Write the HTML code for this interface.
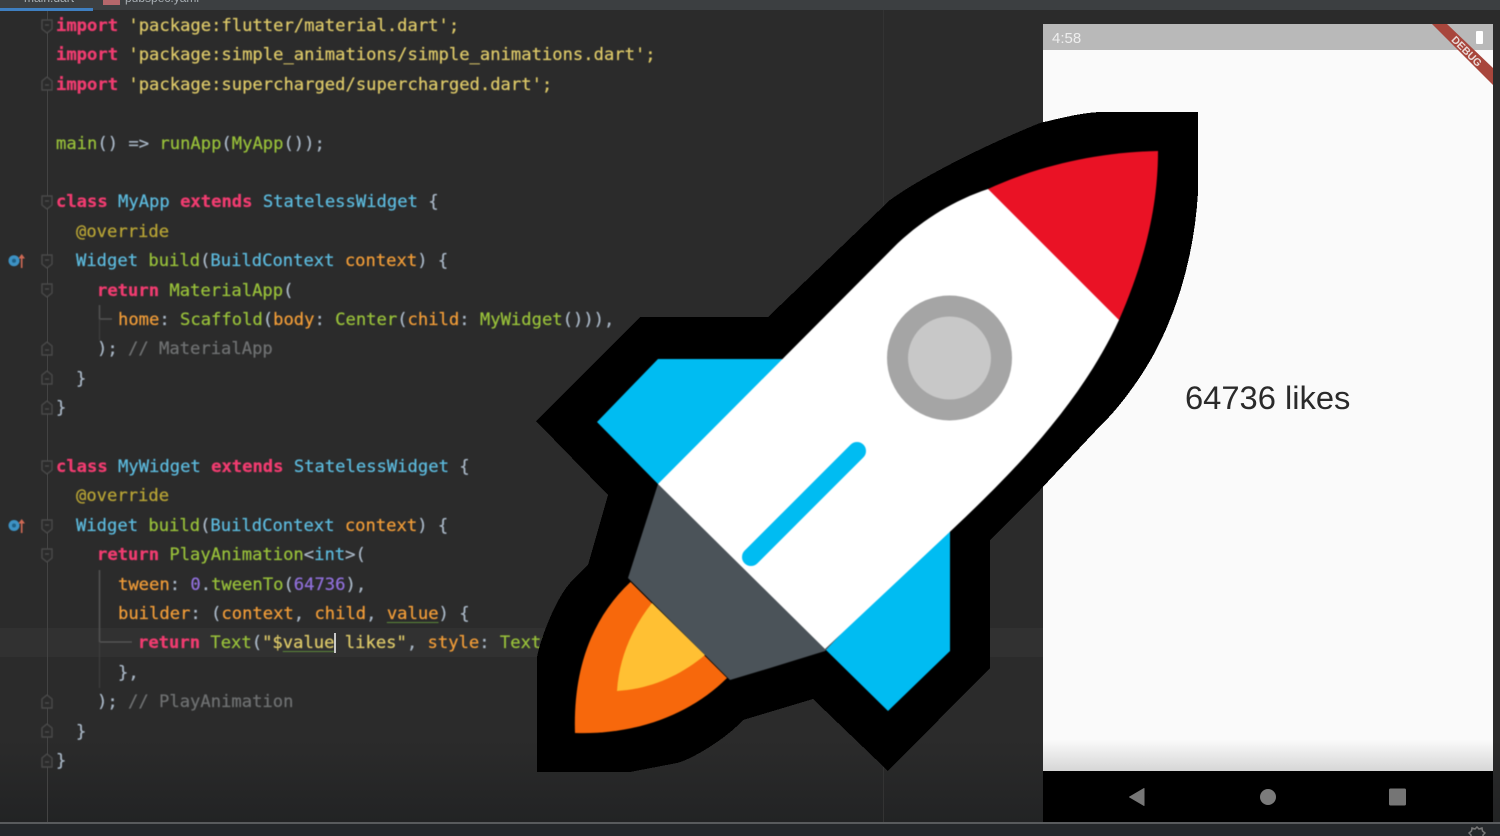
<!DOCTYPE html>
<html><head><meta charset="utf-8"><style>
html,body{margin:0;padding:0;background:#2b2b2b}
#root{position:relative;width:1500px;height:836px;overflow:hidden;background:linear-gradient(#2b2b2b 0,#2b2b2b 740px,#222324 822px)}
.top{position:absolute;left:0;top:0;width:1500px;height:10px;background:#3c3f41}
.tab{position:absolute;left:0;top:8px;width:93px;height:3px;background:#3f7fc0}
.tt{position:absolute;top:-9px;font:12px "Liberation Sans",sans-serif;color:#a9b0b5;white-space:pre}
.hl{position:absolute;left:0;top:628px;width:1043px;height:29px;background:#313131}
.code{position:absolute;left:0;top:1px;filter:blur(.4px);font-family:"DejaVu Sans Mono","Liberation Mono",monospace;font-size:17.18px;color:#a9b7c6}
.l{position:absolute;height:29px;line-height:29px;white-space:pre;-webkit-text-stroke:.25px currentColor}
.k{color:#f03c70;font-weight:bold}.s{color:#dcc868}.g{color:#98c03a}.c{color:#5cb9dc}.o{color:#f09c38}.m{color:#6f7172}.a{color:#b8a435}.n{color:#9170dc}.p{color:#a9b7c6}
.u{text-decoration:underline;text-decoration-color:#5d8a3a;text-underline-offset:3px}
.phone{position:absolute;left:1043px;top:24px;width:450px;height:798px;background:#fafafa;overflow:hidden}
.sb{position:absolute;left:0;top:0;width:450px;height:26px;background:#b9b9b9}
.time{position:absolute;left:9px;top:6px;font:15px "Liberation Sans",sans-serif;color:#eee}
.shade{position:absolute;left:0;top:716px;width:450px;height:31px;background:linear-gradient(#fafafa,#d6d6d6)}
.nav{position:absolute;left:0;top:747px;width:450px;height:51px;background:#000}
.likes{position:absolute;left:142px;top:354px;font:32.7px/40px "Liberation Sans",sans-serif;color:#2a2a2a;white-space:pre;filter:blur(.3px)}
.bot{position:absolute;left:0;top:822px;width:1500px;height:14px;background:#25282b;border-top:2px solid #595b5d;box-sizing:border-box}
.dbg{font:bold 10.5px "Liberation Sans",sans-serif;fill:#eadbd8}
</style></head><body>
<div id="root">
<div class="hl"></div>
<div style="position:absolute;left:883px;top:10px;width:1px;height:812px;background:#333"></div>
<div style="position:absolute;left:47px;top:10px;width:1px;height:812px;background:#434343"></div>
<div class="top"><div class="tt" style="left:24px">main.dart</div><div style="position:absolute;left:103px;top:0;width:17px;height:5px;background:#b5676b"></div><div class="tt" style="left:125px">pubspec.yaml</div></div>
<div class="tab"></div>

<svg style="position:absolute;left:0;top:0;filter:blur(.4px)" width="140" height="836" fill="#2b2b2b" stroke="#4a4a4a" stroke-width="1.4">
<g><path d="M42 20h10v9l-5 4-5-4zM45 25h4"/><path d="M42 196h10v9l-5 4-5-4zM45 201h4"/><path d="M42 255h10v9l-5 4-5-4zM45 260h4"/><path d="M42 284h10v9l-5 4-5-4zM45 289h4"/><path d="M42 461h10v9l-5 4-5-4zM45 466h4"/><path d="M42 520h10v9l-5 4-5-4zM45 525h4"/><path d="M42 549h10v9l-5 4-5-4zM45 554h4"/></g>
<g><path d="M42 90V81l5-4 5 4v9zM45 85h4"/><path d="M42 355V346l5-4 5 4v9zM45 350h4"/><path d="M42 384V375l5-4 5 4v9zM45 379h4"/><path d="M42 414V405l5-4 5 4v9zM45 409h4"/><path d="M42 708V699l5-4 5 4v9zM45 703h4"/><path d="M42 737V728l5-4 5 4v9zM45 732h4"/><path d="M42 767V758l5-4 5 4v9zM45 762h4"/></g>
<g fill="none" stroke="#555"><path d="M99.500 305V319H112"/><path d="M99.500 319V340" stroke="#3c3c3c"/><path d="M99.500 570V642H132"/><path d="M99.500 642V688" stroke="#3c3c3c"/></g>
<g stroke="none"><circle cx="14" cy="260.700" r="5.500" fill="#3d92c4"/><circle cx="14" cy="260.700" r="2" fill="#1f5f85"/><path d="M21.700 254l3.300 4.500h-2.500v9.500h-1.600v-9.500h-2.500z" fill="#d06a55"/>
<circle cx="14" cy="525.500" r="5.500" fill="#3d92c4"/><circle cx="14" cy="525.500" r="2" fill="#1f5f85"/><path d="M21.700 519l3.300 4.500h-2.500v9.500h-1.600v-9.500h-2.500z" fill="#d06a55"/></g>
</svg>

<div class="code">
<div class="l" style="left:56px;top:11px"><span class="k">import</span> <span class="s">'package:flutter/material.dart'</span><span class="s">;</span></div>
<div class="l" style="left:56px;top:40px"><span class="k">import</span> <span class="s">'package:simple_animations/simple_animations.dart'</span><span class="s">;</span></div>
<div class="l" style="left:56px;top:70px"><span class="k">import</span> <span class="s">'package:supercharged/supercharged.dart'</span><span class="s">;</span></div>
<div class="l" style="left:56px;top:129px"><span class="g">main</span>() =&gt; <span class="g">runApp</span>(<span class="g">MyApp</span>());</div>
<div class="l" style="left:56px;top:187px"><span class="k">class</span> <span class="c">MyApp</span> <span class="k">extends</span> <span class="c">StatelessWidget</span> {</div>
<div class="l" style="left:76px;top:217px"><span class="a">@override</span></div>
<div class="l" style="left:76px;top:246px"><span class="c">Widget</span> <span class="g">build</span>(<span class="c">BuildContext</span> <span class="o">context</span>) {</div>
<div class="l" style="left:97px;top:276px"><span class="k">return</span> <span class="g">MaterialApp</span>(</div>
<div class="l" style="left:118px;top:305px"><span class="o">home</span>: <span class="g">Scaffold</span>(<span class="o">body</span>: <span class="g">Center</span>(<span class="o">child</span>: <span class="g">MyWidget</span>())),</div>
<div class="l" style="left:97px;top:334px">); <span class="m">// MaterialApp</span></div>
<div class="l" style="left:76px;top:364px">}</div>
<div class="l" style="left:56px;top:393px">}</div>
<div class="l" style="left:56px;top:452px"><span class="k">class</span> <span class="c">MyWidget</span> <span class="k">extends</span> <span class="c">StatelessWidget</span> {</div>
<div class="l" style="left:76px;top:481px"><span class="a">@override</span></div>
<div class="l" style="left:76px;top:511px"><span class="c">Widget</span> <span class="g">build</span>(<span class="c">BuildContext</span> <span class="o">context</span>) {</div>
<div class="l" style="left:97px;top:540px"><span class="k">return</span> <span class="g">PlayAnimation</span>&lt;<span class="c">int</span>&gt;(</div>
<div class="l" style="left:118px;top:570px"><span class="o">tween</span>: <span class="n">0</span>.<span class="g">tweenTo</span>(<span class="n">64736</span>),</div>
<div class="l" style="left:118px;top:599px"><span class="o">builder</span>: (<span class="o">context</span>, <span class="o">child</span>, <span class="o u">value</span>) {</div>
<div class="l" style="left:138px;top:628px"><span class="k">return</span> <span class="g">Text</span>(<span class="s">"$<span class="u">value</span> likes"</span>, <span class="o">style</span>: <span class="g">TextStyle</span>(<span class="o">fontSize</span>: <span class="n">30</span>));</div>
<div class="l" style="left:118px;top:658px">},</div>
<div class="l" style="left:97px;top:687px">); <span class="m">// PlayAnimation</span></div>
<div class="l" style="left:76px;top:717px">}</div>
<div class="l" style="left:56px;top:746px">}</div>
</div>
<div style="position:absolute;left:334px;top:633px;width:2px;height:20px;background:#c9c9c9"></div>

<div class="phone">
<div class="sb"></div><div class="time">4:58</div>
<div style="position:absolute;left:433px;top:7px;width:7px;height:13px;background:#fff;border-radius:1px"></div>
<svg style="position:absolute;left:0;top:0" width="450" height="70">
<polygon points="389,0 404,0 450,44 450,61" fill="#a8463c"/>
<text class="dbg" text-anchor="middle" transform="translate(424,27) rotate(45)" y="4">DEBUG</text>
</svg>
<div class="likes">64736 likes</div>
<div class="shade"></div>
<div class="nav"></div>
<svg style="position:absolute;left:0;top:747px" width="450" height="51">
<path d="M86.500 26L101 17.500V34.500Z" fill="#777" stroke="#777" stroke-linejoin="round"/>
<circle cx="225" cy="26" r="8" fill="#7b7b7b"/>
<rect x="346" y="17.500" width="17" height="17" rx="1.500" fill="#757575"/>
</svg>
</div>

<svg style="position:absolute;left:0;top:0" width="1500" height="836">
<path shape-rendering="crispEdges" d="M1198 112V193C1195 240 1185 285 1167 327C1157 350 1148 365 1140 377C1130 392 1115 412 1103 423L1040 490L990 540V668L888 771L813 699L743 720C725 740 690 760 677 763L630 772H537V657C540 640 555 600 570 583C577 575 583 570 588 565L608 495L536 421L640 317H768L890 200C920 178 985 145 1040 123C1065 117 1085 112 1103 112Z" fill="#000"/>
<g style="filter:blur(.5px)">
<path d="M658 359H782L800 372L675 500L658 484L597 422Z" fill="#00bcf2"/>
<path d="M950 520V651L888 711L825 649L840 630Z" fill="#00bcf2"/>
<path d="M630.500 582L727 678C690 715 635 735 575 733C573 672 590 620 630.500 582Z" fill="#f7680c"/>
<path d="M652 603L705 655C680 676 650 689 617 691C619 658 632 628 652 603Z" fill="#ffc033"/>
<path d="M658 484L680 470L840 635L825 651L770 668L730 680L628 578Z" fill="#4b5359"/>
<path d="M658 484L898 243C925 218 955 200 988 189L1100 200L1119 320C1080 405 1010 475 955 527L825 649Z" fill="#fff"/>
<path d="M988 189C1040 165 1100 152 1158 151C1158 210 1143 265 1119 320Z" fill="#ea1225"/>
<circle cx="949.500" cy="358" r="62.500" fill="#a5a5a5"/>
<circle cx="949.500" cy="358" r="41.500" fill="#c8c8c8"/>
<path d="M751 557L857 451" stroke="#00bcf2" stroke-width="18" stroke-linecap="round"/>
</g>
</svg>

<div class="bot"></div>
<svg style="position:absolute;left:1468px;top:826px" width="18" height="10"><path d="M9 1l2 2 3-1 .5 3 2.500 2-2 2v2H3V9L1 7l2.500-2L4 2l3 1z" fill="none" stroke="#777" stroke-width="1.500"/></svg>
</div>
</body></html>
